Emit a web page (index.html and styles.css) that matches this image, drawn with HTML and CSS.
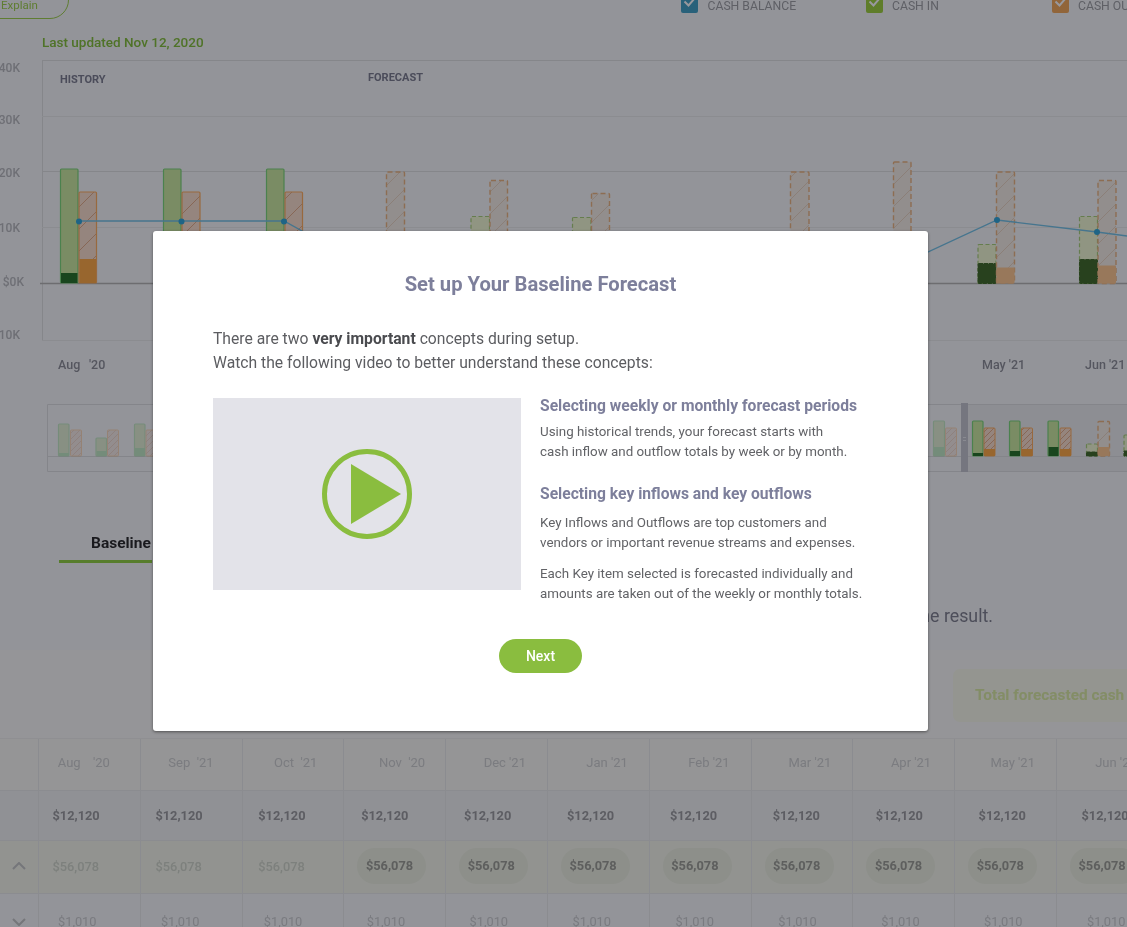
FILE: index.html
```html
<!DOCTYPE html>
<html lang="en">
<head>
<meta charset="utf-8">
<title>Set up Your Baseline Forecast</title>
<link rel="stylesheet" href="styles.css">
</head>
<body>
<div class="page">
  <header class="topbar">
    <button class="explain">Explain</button>
    <ul class="legend">
      <li class="legend-item item-balance"><span class="check teal"><svg viewBox="0 0 17 17"><path d="M3.5 5.5l4 4 6-7"/></svg></span>CASH BALANCE</li>
      <li class="legend-item item-in"><span class="check green"><svg viewBox="0 0 17 17"><path d="M3.5 5.5l4 4 6-7"/></svg></span>CASH IN</li>
      <li class="legend-item item-out"><span class="check orange"><svg viewBox="0 0 17 17"><path d="M3.5 5.5l4 4 6-7"/></svg></span>CASH OUT</li>
    </ul>
  </header>
  <p class="updated">Last updated Nov 12, 2020</p>

  <svg class="chart" viewBox="0 53 1127 447" width="1127" height="447">
    <defs>
      <pattern id="hatch" width="22" height="22" patternUnits="userSpaceOnUse">
        <rect class="hatch-bg" width="22" height="22"/>
        <path class="hatch-line" d="M-2 24L24 -2M-2 2L2 -2M20 24L24 20"/>
      </pattern>
      <pattern id="hatch-f" width="22" height="22" patternUnits="userSpaceOnUse">
        <rect class="hatch-f-bg" width="22" height="22"/>
        <path class="hatch-f-line" d="M-2 24L24 -2M-2 2L2 -2M20 24L24 20"/>
      </pattern>
      <pattern id="hatch-m" width="6" height="6" patternUnits="userSpaceOnUse">
        <rect class="hatch-bg" width="6" height="6"/>
        <path class="hatch-line" d="M-1 7L7 -1"/>
      </pattern>
    </defs>

    <path class="grid-strong" d="M42 60.5H1127M42 171.5H1127M42.5 60V340"/>
    <path class="grid-faint" d="M42 116.5H1127M42 227.5H1127M42 340.5H1127"/>
    <path class="zero" d="M40 283.5H1127"/>

    <g class="axis">
      <text x="20" y="72">40K</text>
      <text x="20" y="124">30K</text>
      <text x="20" y="177">20K</text>
      <text x="20" y="232">10K</text>
      <text x="24" y="286">$0K</text>
      <text x="20" y="339">10K</text>
    </g>
    <text class="zone" x="60" y="83">HISTORY</text>
    <text class="zone" x="368" y="81">FORECAST</text>

    <g>
      <rect class="in" x="60.5" y="169" width="17.5" height="114" rx="1"/>
      <rect class="in-dark" x="61" y="273" width="16.5" height="10"/>
      <rect class="out" x="79" y="192" width="17.5" height="91" rx="1"/>
      <rect class="out-dark" x="79.5" y="259" width="16.5" height="24"/>
      <rect class="in" x="163.5" y="169" width="17.5" height="114" rx="1"/>
      <rect class="out" x="182" y="192" width="18" height="91" rx="1"/>
      <rect class="in" x="266.5" y="169" width="17.5" height="114" rx="1"/>
      <rect class="out" x="285" y="192" width="17.5" height="91" rx="1"/>

      <rect class="out-f" x="386.5" y="172" width="18" height="111" rx="1"/>
      <rect class="in-f" x="471" y="216.5" width="18.5" height="67" rx="1"/>
      <rect class="out-f" x="490" y="180.5" width="17.5" height="103" rx="1"/>
      <rect class="in-f" x="572.5" y="217.5" width="18.5" height="66" rx="1"/>
      <rect class="out-f" x="591.5" y="193.5" width="18" height="90" rx="1"/>
      <rect class="out-f" x="790.5" y="172" width="18.5" height="111" rx="1"/>
      <rect class="out-f" x="893.5" y="162" width="17.5" height="121" rx="1"/>

      <rect class="in-f" x="978" y="244.5" width="18" height="39" rx="1"/>
      <rect class="in-f-dark" x="978" y="263.5" width="18" height="20" rx="1"/>
      <rect class="out-f" x="996.5" y="172" width="18" height="111" rx="1"/>
      <rect class="out-f-dark" x="996.5" y="267.5" width="18" height="16" rx="1"/>
      <rect class="in-f" x="1079.5" y="216.5" width="18" height="67" rx="1"/>
      <rect class="in-f-dark" x="1079.5" y="259.5" width="18" height="24" rx="1"/>
      <rect class="out-f" x="1098" y="180.5" width="18" height="103" rx="1"/>
      <rect class="out-f-dark" x="1098" y="265.5" width="18" height="18" rx="1"/>
    </g>

    <polyline class="balance" points="79,221 181.5,221 284,221 340,252 900,265 997,220 1097,232 1127,236"/>
    <g class="dots">
      <circle cx="79" cy="221.5" r="3"/>
      <circle cx="181.5" cy="221.5" r="3"/>
      <circle cx="284" cy="221.5" r="3"/>
      <circle cx="997" cy="220" r="3"/>
      <circle cx="1097" cy="232" r="3"/>
    </g>

    <g class="month">
      <text x="58" y="369">Aug</text>
      <text x="89" y="369">'20</text>
      <text x="982" y="369">May '21</text>
      <text x="1085" y="369">Jun '21</text>
    </g>

    <rect class="mini-selected" x="968" y="404" width="159" height="67"/>
    <path class="mini-box" d="M1127 404.5H47.5V471.5H1127M47 456.5H1127"/>

    <g class="mini-faded">
      <rect class="in" x="58.5" y="424" width="10.5" height="32" rx="1"/>
      <rect class="in-dark-m" x="59" y="453" width="10" height="3"/>
      <rect class="out-m" x="70.5" y="430" width="11" height="26" rx="1"/>
      <rect class="in" x="96" y="438" width="10.5" height="18" rx="1"/>
      <rect class="in-dark-m" x="96.5" y="451" width="10" height="5"/>
      <rect class="out-m" x="107.5" y="430" width="11" height="26" rx="1"/>
      <rect class="in" x="134.5" y="424" width="10.5" height="32" rx="1"/>
      <rect class="in-dark-m" x="135" y="448" width="10" height="8"/>
      <rect class="out-m" x="146" y="430" width="11" height="26" rx="1"/>
      <rect class="in" x="933.5" y="421" width="11" height="35" rx="1"/>
      <rect class="in-dark-m" x="934" y="447" width="10" height="9"/>
      <rect class="out-m" x="945.5" y="428" width="11" height="28" rx="1"/>
    </g>
    <g>
      <rect class="in" x="972.5" y="421" width="10.5" height="35" rx="1"/>
      <rect class="in-dark" x="973" y="453" width="10" height="3"/>
      <rect class="out-m" x="984" y="428" width="11" height="28" rx="1"/>
      <rect class="out-dark" x="984" y="449" width="11" height="7"/>
      <rect class="in" x="1009.5" y="421" width="10.5" height="35" rx="1"/>
      <rect class="in-dark" x="1010" y="451" width="10" height="5"/>
      <rect class="out-m" x="1021.5" y="428" width="11" height="28" rx="1"/>
      <rect class="out-dark" x="1021.5" y="449" width="11" height="7"/>
      <rect class="in" x="1048" y="421" width="10.5" height="35" rx="1"/>
      <rect class="in-dark" x="1048.5" y="447" width="10" height="9"/>
      <rect class="out-m" x="1060" y="428" width="11" height="28" rx="1"/>
      <rect class="out-dark" x="1060" y="449" width="11" height="7"/>
      <rect class="in-f" x="1086.5" y="444" width="11" height="12" rx="1"/>
      <rect class="in-f-dark" x="1086.5" y="452" width="11" height="4"/>
      <rect class="out-f" x="1098" y="421.5" width="11.5" height="34.5" rx="1"/>
      <rect class="out-f-dark" x="1098" y="447" width="11.5" height="9"/>
      <rect class="in-f" x="1124" y="435" width="8" height="21" rx="1"/>
      <rect class="in-f-dark" x="1124" y="451" width="8" height="5"/>
    </g>
    <rect class="handle" x="961" y="403" width="7" height="69"/>
    <path class="handle-grip" d="M963 437.5H966M963 440.5H966"/>
  </svg>

  <section class="tabs-area">
    <div class="tab">Baseline</div>
    <p class="note">Review each period, adjust your amounts and see the result.</p>
  </section>

  <section class="summary">
    <div class="total">Total forecasted cash in</div>
  </section>

  <section class="table">
    <div class="row row-head">
      <div class="cell"></div>
      <div class="cell wide-gap">Aug '20</div><div class="cell">Sep &nbsp;'21</div><div class="cell">Oct &nbsp;'21</div><div class="cell">Nov &nbsp;'20</div><div class="cell">Dec '21</div><div class="cell">Jan '21</div><div class="cell">Feb '21</div><div class="cell">Mar '21</div><div class="cell">Apr '21</div><div class="cell">May '21</div><div class="cell">Jun '21</div>
    </div>
    <div class="row row-bold">
      <div class="cell"></div>
      <div class="cell">$12,120</div><div class="cell">$12,120</div><div class="cell">$12,120</div><div class="cell">$12,120</div><div class="cell">$12,120</div><div class="cell">$12,120</div><div class="cell">$12,120</div><div class="cell">$12,120</div><div class="cell">$12,120</div><div class="cell">$12,120</div><div class="cell">$12,120</div>
    </div>
    <div class="row row-green">
      <div class="cell cell-chevron"><svg viewBox="0 0 14 8" width="14" height="8"><path d="M1 7l6-6 6 6"/></svg></div>
      <div class="cell">$56,078</div><div class="cell">$56,078</div><div class="cell">$56,078</div>
      <div class="cell"><span class="pill">$56,078</span></div><div class="cell"><span class="pill">$56,078</span></div><div class="cell"><span class="pill">$56,078</span></div><div class="cell"><span class="pill">$56,078</span></div><div class="cell"><span class="pill">$56,078</span></div><div class="cell"><span class="pill">$56,078</span></div><div class="cell"><span class="pill">$56,078</span></div><div class="cell"><span class="pill">$56,078</span></div>
    </div>
    <div class="row row-light">
      <div class="cell cell-chevron"><svg viewBox="0 0 14 8" width="14" height="8"><path d="M1 1l6 6 6-6"/></svg></div>
      <div class="cell">$1,010</div><div class="cell">$1,010</div><div class="cell">$1,010</div><div class="cell">$1,010</div><div class="cell">$1,010</div><div class="cell">$1,010</div><div class="cell">$1,010</div><div class="cell">$1,010</div><div class="cell">$1,010</div><div class="cell">$1,010</div><div class="cell">$1,010</div>
    </div>
  </section>
</div>

<div class="overlay"></div>

<div class="modal" role="dialog">
  <h1 class="modal-title">Set up Your Baseline Forecast</h1>
  <p class="intro">There are two <strong>very important</strong> concepts during setup.<br>Watch the following video to better understand these concepts:</p>
  <div class="modal-body">
    <div class="video">
      <svg viewBox="0 0 90 90" width="90" height="90">
        <circle class="play-ring" cx="45" cy="45" r="42.5"/>
        <path class="play-tri" d="M29 15L79 45L29 75Z"/>
      </svg>
    </div>
    <div class="copy">
      <h2>Selecting weekly or monthly forecast periods</h2>
      <p>Using historical trends, your forecast starts with<br>cash inflow and outflow totals by week or by month.</p>
      <h2 class="second">Selecting key inflows and key outflows</h2>
      <p class="spaced">Key Inflows and Outflows are top customers and<br>vendors or important revenue streams and expenses.</p>
      <p class="last">Each Key item selected is forecasted individually and<br>amounts are taken out of the weekly or monthly totals.</p>
    </div>
  </div>
  <div class="actions"><button class="next">Next</button></div>
</div>
</body>
</html>
```

FILE: styles.css
```css
* { box-sizing: border-box; }
html, body { margin: 0; padding: 0; height: 100%; overflow: hidden; background: #f4f6f6; }
body { font-family: Roboto, "Liberation Sans", sans-serif; }

.page {
  width: 1127px;
  height: 927px;
  overflow: hidden;
  display: flex;
  flex-direction: column;
  background: #f4f6f6;
  filter: blur(0.45px);
}

/* top bar */
.topbar { display: flex; height: 31px; flex: none; }
.explain {
  flex: none;
  width: 89px;
  height: 39px;
  margin: -20px 0 0 -20px;
  padding: 0 0 7px 20px;
  border: 1.5px solid #8cc828;
  border-radius: 19px;
  background: transparent;
  color: #8cc828;
  font: 400 11.5px/1 Roboto, sans-serif;
  display: flex;
  align-items: flex-end;
}
.legend { display: flex; flex: none; margin: -4px 0 0 612px; padding: 0; list-style: none; }
.legend-item {
  display: flex;
  flex: none;
  align-items: flex-start;
  gap: 9.5px;
  font-size: 12.2px;
  line-height: 18px;
  padding-top: 1px;
  color: #8c8e90;
  white-space: nowrap;
}
.item-balance { width: 184.5px; }
.item-in { width: 186px; }
.check { width: 17px; height: 17px; margin-top: -1px; border-radius: 2px; flex: none; display: block; }
.check svg { display: block; fill: none; stroke: #fff; stroke-width: 2; }
.teal { background: #2090b8; }
.green { background: #8cc818; }
.orange { background: #f09838; }

.updated {
  margin: 0;
  height: 22px;
  flex: none;
  padding-left: 42px;
  font-size: 13.5px;
  font-weight: 500;
  line-height: 22px;
  color: #6cb414;
}

/* chart */
.chart { display: block; flex: none; }
.grid-strong { fill: none; stroke: #d8dad8; stroke-width: 1; }
.grid-faint { fill: none; stroke: #e4e6e4; stroke-width: 1; }
.zero { stroke: #a8a8a4; stroke-width: 1.5; fill: none; }
.axis text { font: 500 12px Roboto, sans-serif; fill: #aaacae; text-anchor: end; }
.zone { font: 700 11px Roboto, sans-serif; fill: #646678; }
.month text { font: 500 12.5px Roboto, sans-serif; fill: #787a82; }

.in { fill: #c2e68c; stroke: #64d060; stroke-width: 1.2; }
.in-dark { fill: #005a00; }
.in-dark-m { fill: #5cd05c; }
.out { fill: url(#hatch); stroke: #ffa040; stroke-width: 1.2; }
.out-m { fill: url(#hatch-m); stroke: #ffa040; stroke-width: 1; }
.out-dark { fill: #ff9a20; }
.in-f { fill: #eef8c8; stroke: #98c860; stroke-width: 1.2; stroke-dasharray: 4 2.5; }
.in-f-dark { fill: #1e5000; stroke: #1e5000; stroke-width: 1; stroke-dasharray: 4 1; }
.out-f { fill: url(#hatch-f); stroke: #e8a868; stroke-width: 1.4; stroke-dasharray: 5 3; }
.out-f-dark { fill: #ffbf7a; }
.hatch-bg { fill: #f8d8c0; }
.hatch-line { stroke: #dc9c70; stroke-width: 1; fill: none; }
.hatch-f-bg { fill: #f2eade; }
.hatch-f-line { stroke: #e4ccb4; stroke-width: 1; fill: none; }

.balance { fill: none; stroke: #5ab8e0; stroke-width: 1.3; }
.dots circle { fill: #0a96d0; }

.mini-box { fill: none; stroke: #d6d8d8; stroke-width: 1; }
.mini-selected { fill: #e8eaea; }
.mini-faded { opacity: 0.4; }
.handle { fill: #b8bac2; }
.handle-grip { stroke: #e0e2e6; stroke-width: 1; fill: none; }

/* tabs */
.tabs-area { height: 150px; flex: none; }
.tab {
  width: 93px;
  margin-left: 59px;
  padding: 33px 0 7px 32px;
  height: 63px;
  border-bottom: 3px solid #7cc81c;
  font-size: 15.5px;
  font-weight: 700;
  line-height: 20px;
  color: #020200;
  white-space: nowrap;
}
.note {
  margin: 41px 0 0;
  padding-right: 134px;
  text-align: right;
  font-size: 17.8px;
  line-height: 24px;
  color: #686a78;
  white-space: nowrap;
}

/* summary */
.summary { height: 88px; flex: none; padding: 19px 0 0 953px; background: #f8f8f4; }
.total {
  width: 300px;
  height: 53px;
  padding-left: 22px;
  border-radius: 7px;
  background: #f6f8e4;
  color: #d4e890;
  font-size: 15.4px;
  font-weight: 700;
  line-height: 53px;
  white-space: nowrap;
}

/* table */
.table { flex: none; }
.row {
  display: grid;
  grid-template-columns: 38px repeat(11, 101.8px);
  width: 1158px;
  border-bottom: 1px solid #e4e6e4;
  font-size: 12.8px;
}
.cell { border-left: 1px solid #e4e6e4; display: flex; align-items: center; white-space: nowrap; }
.cell:first-child { border-left: 0; justify-content: center; }
.cell:nth-child(2) { --i: 0; }
.cell:nth-child(3) { --i: 1; }
.cell:nth-child(4) { --i: 2; }
.cell:nth-child(5) { --i: 3; }
.cell:nth-child(6) { --i: 4; }
.cell:nth-child(7) { --i: 5; }
.cell:nth-child(8) { --i: 6; }
.cell:nth-child(9) { --i: 7; }
.cell:nth-child(10) { --i: 8; }
.cell:nth-child(11) { --i: 9; }
.cell:nth-child(12) { --i: 10; }

.row-head { height: 53px; background: #f8f8f0; color: #c4c6c4; border-top: 1px solid #ecece8; font-size: 13px; }
.row-head .cell { justify-content: flex-end; padding-right: 21px; padding-bottom: 5px; }
.row-head .cell:nth-child(2) { padding-right: 30px; }
.row-head .cell:nth-child(3) { padding-right: 28px; }
.row-head .cell:nth-child(4) { padding-right: 26px; }
.row-head .cell:nth-child(5) { padding-right: 20px; }
.row-head .cell:nth-child(10) { padding-right: 23px; }
.wide-gap { word-spacing: 9px; }

.row-bold { height: 50px; background: #eef0ee; color: #88898a; font-weight: 700; }
.row-bold .cell:not(:first-child) { padding-left: calc(13.5px + var(--i) * 1.1px); }

.row-green { height: 53px; background: #f2f5e4; color: #c8cebe; font-weight: 500; }
.row-green .cell { padding-bottom: 2px; }
.row-green .cell:nth-child(-n+4):not(:first-child) { padding-left: calc(13.5px + var(--i) * 1.1px); }
.row-green .cell:nth-child(n+5) { padding-left: 13px; }
.pill {
  width: 69px;
  height: 36px;
  padding-left: 8.5px;
  border-radius: 18px;
  background: #e8ecd8;
  color: #8a8c80;
  font-weight: 700;
  line-height: 36px;
}

.row-light { height: 50px; color: #c2c4c4; }
.row-light .cell { align-items: flex-start; padding-top: 20px; }
.row-light .cell:not(:first-child) { padding-left: calc(19px + var(--i) * 1.1px); }
.row-light .cell:first-child { padding-top: 24px; }
.cell-chevron svg { fill: none; stroke: #b8bab8; stroke-width: 2; display: block; }

/* overlay + dialog */
.overlay { position: fixed; inset: 0; background: rgba(50, 50, 60, 0.5); }
.modal {
  position: fixed;
  left: 153px;
  top: 231px;
  width: 775px;
  height: 500px;
  padding: 40px 60px 0;
  background: #fff;
  border-radius: 3px;
  box-shadow: 0 1px 3px rgba(0, 0, 0, 0.45);
  color: #555659;
  filter: blur(0.25px);
}
.modal-title {
  margin: 0;
  font-size: 20.2px;
  font-weight: 700;
  line-height: 26px;
  text-align: center;
  color: #7d7f9b;
}
.intro { margin: 30px 0 0; font-size: 15.7px; line-height: 24px; color: #5c5d61; }
.intro strong { font-weight: 700; color: #4a4b4f; }
.modal-body { display: flex; margin-top: 23px; gap: 19px; }
.video {
  width: 308px;
  height: 192px;
  flex: none;
  background: #e3e3e9;
  display: flex;
  align-items: center;
  justify-content: center;
}
.video svg { display: block; }
.play-ring { fill: none; stroke: #8abd3f; stroke-width: 5; }
.play-tri { fill: #8abd3f; }
.copy { padding-top: 1px; }
.copy h2 { margin: -3px 0 0; font-size: 15.65px; font-weight: 700; line-height: 20px; color: #7d7f9b; white-space: nowrap; }
.copy h2.second { margin-top: 22px; }
.copy p { margin: 6px 0 0; font-size: 13.37px; line-height: 20px; color: #626367; white-space: nowrap; }
.copy p.spaced { margin-top: 9px; }
.copy p.last { margin-top: 11px; }
.actions { display: flex; justify-content: center; margin-top: 35px; }
.next {
  width: 83px;
  height: 34px;
  padding: 0;
  border: 0;
  border-radius: 17px;
  background: #8abd3f;
  color: #fff;
  font: 500 14px/34px Roboto, sans-serif;
}
```
